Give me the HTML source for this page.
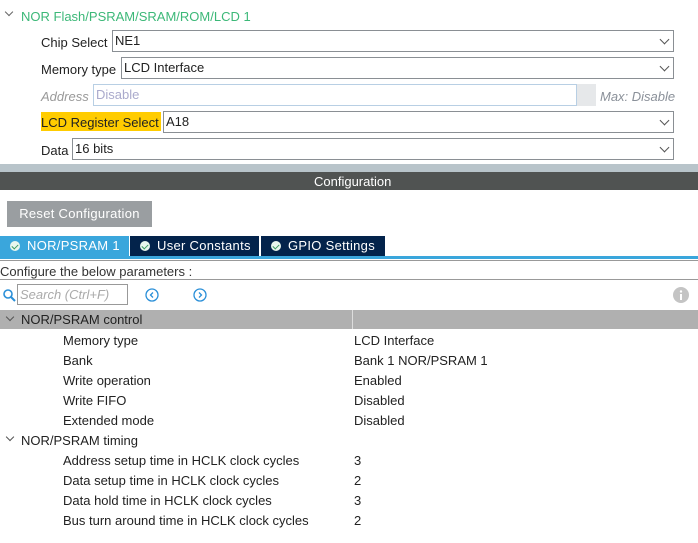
<!DOCTYPE html>
<html><head><style>
*{margin:0;padding:0;box-sizing:border-box}
body{width:698px;height:543px;background:#fff;font-family:"Liberation Sans",sans-serif;font-size:13px;color:#222;position:relative;overflow:hidden}
.a{position:absolute;white-space:nowrap}
.box{position:absolute;border:1px solid #8a8f94;background:#fff;height:22px;line-height:20px;padding-left:2px}
.chev{position:absolute;right:5px;top:5px;width:7px;height:7px;border-right:1px solid #555;border-bottom:1px solid #555;transform:rotate(45deg)}
.tab{position:absolute;top:236px;height:21px;color:#fff;line-height:20px;font-size:13px;padding-left:10px;letter-spacing:0.3px}
.ck{display:inline-block;width:10px;height:10px;border-radius:50%;background:#e8f6ee;margin-right:7px;vertical-align:-1px;position:relative}
.ck:after{content:"";position:absolute;left:3px;top:1.5px;width:3px;height:5px;border-right:1.5px solid #3a9a60;border-bottom:1.5px solid #3a9a60;transform:rotate(45deg)}
.row{position:absolute;left:63px}
.val{position:absolute;left:354px}
</style></head><body>
<div class="a" style="left:6px;top:9px;width:6px;height:6px;border-right:1px solid #666;border-bottom:1px solid #666;transform:rotate(45deg)"></div>
<div class="a" style="left:21px;top:9px;color:#3cb878;font-size:13px">NOR Flash/PSRAM/SRAM/ROM/LCD 1</div>

<div class="a" style="left:41px;top:35px">Chip Select</div>
<div class="box" style="left:112px;top:30px;width:562px">NE1<div class="chev"></div></div>
<div class="a" style="left:41px;top:62px">Memory type</div>
<div class="box" style="left:121px;top:57px;width:553px">LCD Interface<div class="chev"></div></div>
<div class="a" style="left:41px;top:89px;color:#999;font-style:italic">Address</div>
<div class="box" style="left:93px;top:84px;width:484px;border-color:#b8cfe4;color:#aac">Disable</div>
<div class="a" style="left:577px;top:84px;width:19px;height:22px;background:#e6e8ea"></div>
<div class="a" style="left:600px;top:89px;color:#8a9099;font-style:italic">Max: Disable</div>
<div class="a" style="left:41px;top:112px;width:120px;height:19px;background:#ffcc00"></div>
<div class="a" style="left:41px;top:115px">LCD Register Select</div>
<div class="box" style="left:163px;top:111px;width:511px">A18<div class="chev"></div></div>
<div class="a" style="left:41px;top:143px">Data</div>
<div class="box" style="left:72px;top:138px;width:602px">16 bits<div class="chev"></div></div>

<div class="a" style="left:0;top:164px;width:698px;height:8px;background:#b8c4ca"></div>
<div class="a" style="left:0;top:172px;width:698px;height:18px;background:#505352"></div>
<div class="a" style="left:314px;top:174px;color:#fff">Configuration</div>

<div class="a" style="left:7px;top:201px;width:145px;height:26px;background:#9a9ea1;color:#fff;line-height:26px;text-align:center;letter-spacing:0.3px">Reset Configuration</div>

<div class="tab" style="left:0;width:129px;background:#3aa6dc"><span class="ck"></span>NOR/PSRAM 1</div>
<div class="tab" style="left:130px;width:129px;background:#03234b"><span class="ck"></span>User Constants</div>
<div class="tab" style="left:261px;width:124px;background:#03234b"><span class="ck"></span>GPIO Settings</div>
<div class="a" style="left:0;top:256px;width:698px;height:3px;background:#3aa6dc"></div>
<div class="a" style="left:0;top:260px;width:698px;height:1px;background:#999"></div>
<div class="a" style="left:0;top:264px;color:#333">Configure the below parameters :</div>
<div class="a" style="left:0;top:279px;width:698px;height:1px;background:#999"></div>

<svg class="a" style="left:3px;top:289px" width="13" height="13"><circle cx="5" cy="5" r="4" fill="none" stroke="#2a8fd8" stroke-width="1.6"/><line x1="8" y1="8" x2="12" y2="12" stroke="#2a8fd8" stroke-width="2"/></svg>
<div class="a" style="left:17px;top:284px;width:111px;height:21px;border:1px solid #999;color:#aaa;font-style:italic;line-height:19px;padding-left:2px">Search (Ctrl+F)</div>
<svg class="a" style="left:145px;top:288px" width="14" height="14"><circle cx="7" cy="7" r="6" fill="none" stroke="#2a8fd8" stroke-width="1.3"/><path d="M8 4.5L5.5 7L8 9.5" fill="none" stroke="#2a8fd8" stroke-width="1.3"/></svg>
<svg class="a" style="left:193px;top:288px" width="14" height="14"><circle cx="7" cy="7" r="6" fill="none" stroke="#2a8fd8" stroke-width="1.3"/><path d="M6 4.5L8.5 7L6 9.5" fill="none" stroke="#2a8fd8" stroke-width="1.3"/></svg>
<svg class="a" style="left:673px;top:287px" width="16" height="16"><circle cx="8" cy="8" r="8" fill="#c4c4c4"/><rect x="7" y="7" width="2" height="6" fill="#fff"/><circle cx="8" cy="4.5" r="1.2" fill="#fff"/></svg>

<div class="a" style="left:0;top:310px;width:698px;height:19px;background:#b0b0b0"></div>
<div class="a" style="left:352px;top:310px;width:1px;height:19px;background:#ddd"></div>
<div class="a" style="left:7px;top:314px;width:6px;height:6px;border-right:1px solid #555;border-bottom:1px solid #555;transform:rotate(45deg)"></div>
<div class="a" style="left:21px;top:312px">NOR/PSRAM control</div>

<div class="row" style="top:333px">Memory type</div><div class="val" style="top:333px">LCD Interface</div>
<div class="row" style="top:353px">Bank</div><div class="val" style="top:353px">Bank 1 NOR/PSRAM 1</div>
<div class="row" style="top:373px">Write operation</div><div class="val" style="top:373px">Enabled</div>
<div class="row" style="top:393px">Write FIFO</div><div class="val" style="top:393px">Disabled</div>
<div class="row" style="top:413px">Extended mode</div><div class="val" style="top:413px">Disabled</div>
<div class="a" style="left:7px;top:434px;width:6px;height:6px;border-right:1px solid #555;border-bottom:1px solid #555;transform:rotate(45deg)"></div>
<div class="a" style="left:21px;top:433px">NOR/PSRAM timing</div>
<div class="row" style="top:453px">Address setup time in HCLK clock cycles</div><div class="val" style="top:453px">3</div>
<div class="row" style="top:473px">Data setup time in HCLK clock cycles</div><div class="val" style="top:473px">2</div>
<div class="row" style="top:493px">Data hold time in HCLK clock cycles</div><div class="val" style="top:493px">3</div>
<div class="row" style="top:513px">Bus turn around time in HCLK clock cycles</div><div class="val" style="top:513px">2</div>
</body></html>
